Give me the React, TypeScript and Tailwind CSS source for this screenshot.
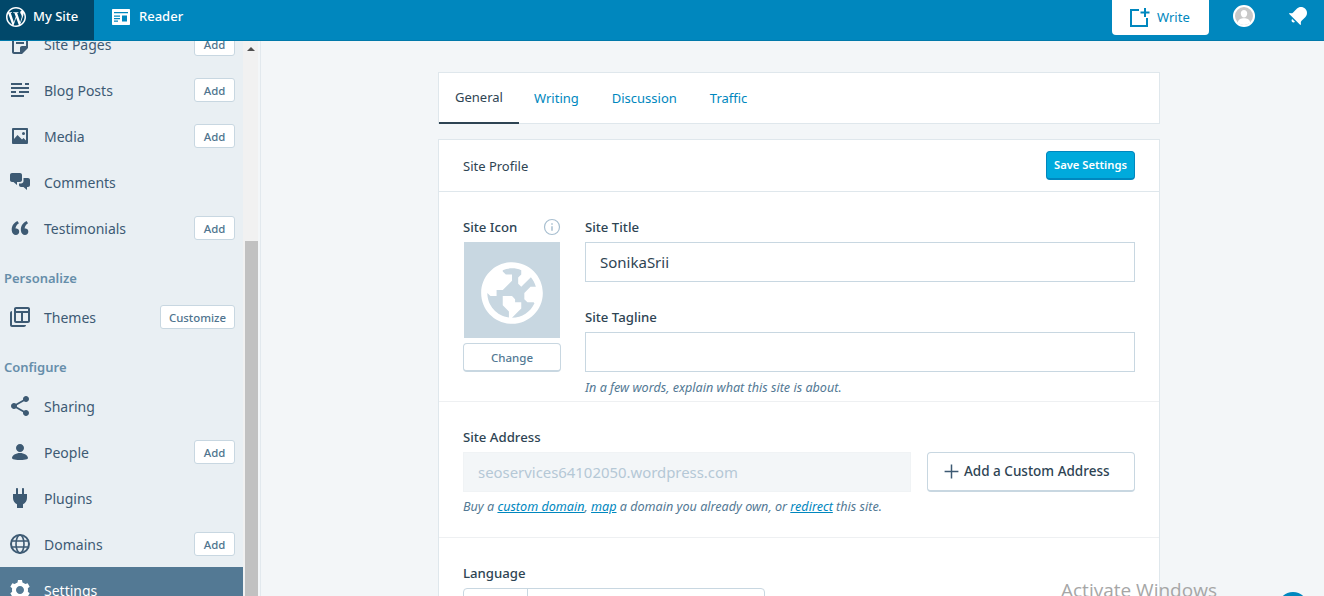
import React from 'react';

const Glyph: React.FC<{ d: string; className?: string }> = ({ d, className = 'w-6 h-6 fill-[#3d5a73]' }) => (
  <svg viewBox="0 0 24 24" className={className}>
    <path d={d} fillRule="evenodd" />
  </svg>
);

const icons = {
  pages: 'M16 8H8V6h8v2zm0 2H8v2h8v-2zm4-6v12l-6 6H6c-1.105 0-2-.895-2-2V4c0-1.105.895-2 2-2h12c1.105 0 2 .895 2 2zm-2 10V4H6v16h6v-4c0-1.105.895-2 2-2h4z',
  posts: 'M16 19H3v-2h13v2zm5-10H3v2h18V9zM3 5v2h11V5H3zm14 0v2h4V5h-4zm-6 8v2h10v-2H11zm-8 0v2h5v-2H3z',
  media: 'M20 4H5C3.9 4 4 4.9 4 6v13c0 1 .9 1 2 1h13c1 0 1-1 1-2V5.500c0-1 0-1.500-1-1.500zM14 9.500a1.500 1.500 0 1 1 3 0 1.500 1.500 0 0 1-3 0zM6 15l3.500-4 4.500 4.500 1.500-1.500 2.500 2.500V6H6v9z',
  comments: 'M2 5c0-1.100.9-2 2-2h8c1.100 0 2 .9 2 2v5c0 1.100-.9 2-2 2H9v3l-3.500-3H4c-1.100 0-2-.9-2-2V5zM15.500 8H20c1.100 0 2 .9 2 2v5c0 1.100-.9 2-2 2h-1v3l-3.500-3H13c-1.100 0-2-.9-2-2v-1.500h2c1.400 0 2.500-1.100 2.500-2.500V8z',
  quote: 'M11.192 15.757c0-.88-.23-1.618-.69-2.217-.326-.412-.768-.683-1.327-.812-.55-.128-1.07-.137-1.54-.028-.16-.95.1-1.956.76-3.022.66-1.065 1.515-1.867 2.558-2.403L9.373 5c-.8.396-1.56.898-2.26 1.505-.71.607-1.34 1.305-1.9 2.094s-.98 1.68-1.25 2.69-.346 2.04-.217 3.1c.168 1.4.62 2.52 1.356 3.35.735.84 1.652 1.26 2.748 1.26.965 0 1.766-.29 2.4-.878.628-.576.94-1.365.94-2.368l.002.003zm9.124 0c0-.88-.23-1.618-.69-2.217-.326-.42-.77-.692-1.327-.817-.56-.124-1.074-.13-1.54-.022-.16-.94.09-1.95.75-3.02.66-1.06 1.514-1.86 2.557-2.4L18.49 5c-.8.396-1.555.898-2.26 1.505-.708.607-1.34 1.305-1.894 2.094-.556.79-.97 1.68-1.24 2.69-.273 1-.345 2.04-.217 3.1.165 1.4.615 2.52 1.35 3.35.732.833 1.646 1.25 2.742 1.25.967 0 1.768-.29 2.402-.876.627-.576.942-1.365.942-2.368v.01z',
  themes: 'M4 6c-1.105 0-2 .895-2 2v12c0 1.100.9 2 2 2h12c1.105 0 2-.895 2-2H4V6zm16-4H8c-1.105 0-2 .895-2 2v12c0 1.105.895 2 2 2h12c1.105 0 2-.895 2-2V4c0-1.105-.895-2-2-2zM8 8h5v8H8V8zm7 0h5v8h-5V8zM8 4h12v2H8V4z',
  share: 'M18 16c-.788 0-1.5.31-2.034.807L8.91 12.7c.05-.222.09-.45.09-.7s-.04-.478-.09-.7l7.05-4.11c.54.5 1.25.81 2.04.81 1.66 0 3-1.34 3-3s-1.34-3-3-3-3 1.34-3 3c0 .25.04.48.09.7L8.04 9.81C7.5 9.31 6.79 9 6 9c-1.66 0-3 1.34-3 3s1.34 3 3 3c.79 0 1.5-.31 2.04-.81l7.05 4.12c-.05.22-.09.45-.09.69 0 1.66 1.34 3 3 3s3-1.34 3-3-1.34-3-3-3z',
  person: 'M12 4c2.200 0 4 1.800 4 4s-1.800 4-4 4-4-1.800-4-4 1.800-4 4-4zm0 16s8 0 8-2c0-2.400-3.900-5-8-5s-8 2.600-8 5c0 2 8 2 8 2z',
  plug: 'M16 8V3c0-.552-.448-1-1-1s-1 .448-1 1v5h-4V3c0-.552-.448-1-1-1s-1 .448-1 1v5H5v4c0 2.790 1.637 5.193 4 6.317V22h6v-3.683c2.363-1.124 4-3.527 4-6.317V8h-3z',
  cog: 'M20 12c0-.568-.06-1.122-.174-1.656l1.834-1.612-2-3.464-2.322.786c-.82-.736-1.787-1.308-2.86-1.657L14 2h-4l-.48 2.397c-1.07.35-2.04.92-2.858 1.657L4.34 5.268l-2 3.464 1.834 1.612C4.06 10.878 4 11.432 4 12s.06 1.122.174 1.656L2.34 15.268l2 3.464 2.322-.786c.82.736 1.787 1.308 2.86 1.657L10 22h4l.48-2.397c1.07-.35 2.04-.92 2.858-1.657l2.322.786 2-3.464-1.834-1.612C19.94 13.122 20 12.568 20 12zm-8 4c-2.210 0-4-1.790-4-4s1.790-4 4-4 4 1.790 4 4-1.790 4-4 4z',
  wp: 'M12 2C6.477 2 2 6.477 2 12s4.477 10 10 10 10-4.477 10-10S17.523 2 12 2zM3.500 12c0-1.232.264-2.402.736-3.459L8.291 19.650C5.455 18.272 3.500 15.365 3.500 12zm8.500 8.500c-.834 0-1.640-.122-2.401-.346l2.551-7.411 2.613 7.158c.017.042.038.081.061.117-.884.311-1.833.482-2.824.482zm1.172-12.485c.512-.027.973-.081.973-.081.458-.054.404-.727-.054-.701 0 0-1.377.108-2.266.108-.835 0-2.239-.108-2.239-.108-.459-.026-.512.674-.054.701 0 0 .434.054.892.081l1.324 3.629-1.860 5.579-3.096-9.208c.512-.027.973-.081.973-.081.458-.054.404-.727-.054-.701 0 0-1.376.108-2.265.108-.16 0-.347-.004-.547-.01C6.418 5.025 9.030 3.500 12 3.500c2.213 0 4.228.846 5.740 2.232-.037-.002-.072-.007-.11-.007-.835 0-1.427.727-1.427 1.509 0 .701.404 1.293.835 1.994.323.566.701 1.293.701 2.344 0 .727-.28 1.572-.647 2.748l-.848 2.833-3.072-9.138zm3.101 11.332l2.596-7.506c.485-1.213.646-2.182.646-3.045 0-.313-.021-.603-.057-.874.664 1.211 1.042 2.602 1.042 4.078 0 3.134-1.700 5.874-4.227 7.347z',
  bell: 'M6.140 14.970l2.828 2.827c-.362.362-.862.586-1.414.586-1.105 0-2-.895-2-2 0-.552.224-1.052.586-1.414zm8.867 5.324L14.300 21 3 9.700l.706-.707 1.102.157c.754.108 1.690-.122 2.077-.51l3.885-3.884c2.340-2.340 6.135-2.340 8.475 0s2.340 6.135 0 8.475l-3.885 3.886c-.388.388-.618 1.323-.51 2.077l.157 1.100z',
  globe: 'M12 2C6.477 2 2 6.477 2 12s4.477 10 10 10 10-4.477 10-10S17.523 2 12 2zm0 18l2-2 1-1v-2h-2v-1l-1-1H9v3l2 2v1.930c-3.940-.494-7-3.858-7-7.930l1 1h2v-2h2l3-3V6h-2L9 5v-.41C9.927 4.210 10.940 4 12 4s2.073.212 3 .59V6l-1 1v2l1 1 3.130-3.130c.752.897 1.304 1.964 1.606 3.130H18l-2 2v2l1 1h2l.286.286C18.030 18.060 15.240 20 12 20z',
};

const ReaderIcon = () => (
  <svg viewBox="0 0 18 16" className="w-[18px] h-[16px] mr-[9px] fill-white">
    <path
      fillRule="evenodd"
      d="M1 0h16c.6 0 1 .4 1 1v14c0 .6-.4 1-1 1H1c-.6 0-1-.4-1-1V1c0-.6.4-1 1-1zm1 3v1.300h14V3H2zm0 3.500v1.300h6V6.500H2zm0 2.500v1.300h6V9H2zm0 2.500v1.300h4v-1.300H2zM10 6.500v6h5v-6h-5z"
    />
  </svg>
);

const DomainIcon = () => (
  <svg viewBox="0 0 24 24" className="w-6 h-6 fill-none stroke-[#3d5a73] stroke-2">
    <circle cx="12" cy="12" r="9" />
    <ellipse cx="12" cy="12" rx="4" ry="9" strokeWidth="1.6" />
    <path d="M3.500 9h17M3.500 15h17" strokeWidth="1.6" />
  </svg>
);

const SideRow: React.FC<{ icon: React.ReactNode; label: string; action?: string }> = ({ icon, label, action }) => (
  <div className="h-[46px] flex items-center pl-2 pr-2 shrink-0">
    <span className="w-6 h-6 mr-3 shrink-0">{icon}</span>
    <span className="flex-1 text-[14px] text-[#3d5a73]">{label}</span>
    {action && (
      <span className="h-[24px] px-[8px] pt-px min-w-[41px] flex items-center justify-center bg-white border border-[#c8d7e1] rounded-[3px] text-[11.4px] text-[#4f748e] font-medium">
        {action}
      </span>
    )}
  </div>
);

const SideHeading: React.FC<{ children: React.ReactNode }> = ({ children }) => (
  <div className="h-[43px] pt-[18px] pl-1 text-[13px] leading-[18px] font-semibold text-[#668eaa] shrink-0">{children}</div>
);

const Sidebar = () => (
  <aside className="w-[243px] shrink-0 bg-[#e9eff3] overflow-hidden">
    <div className="-mt-[20px]">
      <SideRow icon={<Glyph d={icons.pages} />} label="Site Pages" action="Add" />
      <SideRow icon={<Glyph d={icons.posts} />} label="Blog Posts" action="Add" />
      <SideRow icon={<Glyph d={icons.media} />} label="Media" action="Add" />
      <SideRow icon={<Glyph d={icons.comments} />} label="Comments" />
      <SideRow icon={<Glyph d={icons.quote} />} label="Testimonials" action="Add" />
      <SideHeading>Personalize</SideHeading>
      <SideRow icon={<Glyph d={icons.themes} />} label="Themes" action="Customize" />
      <SideHeading>Configure</SideHeading>
      <SideRow icon={<Glyph d={icons.share} />} label="Sharing" />
      <SideRow icon={<Glyph d={icons.person} />} label="People" action="Add" />
      <SideRow icon={<Glyph d={icons.plug} />} label="Plugins" />
      <SideRow icon={<DomainIcon />} label="Domains" action="Add" />
      <div className="h-[46px] flex items-center pl-2 bg-[#537994]">
        <span className="w-6 h-6 mr-3 shrink-0"><Glyph d={icons.cog} className="w-6 h-6 fill-white" /></span>
        <span className="text-[14px] text-white">Settings</span>
      </div>
    </div>
  </aside>
);

const Scrollbar = () => (
  <div className="w-[15px] shrink-0 bg-[#f1f1f1] flex flex-col">
    <div className="h-[200px] flex justify-center pt-[6px]">
      <span className="w-0 h-0 border-x-[4px] border-x-transparent border-b-[4px] border-b-[#505050]" />
    </div>
    <div className="flex-1 ml-[2px] bg-[#c1c1c1]" />
  </div>
);

const Label: React.FC<{ children: React.ReactNode }> = ({ children }) => (
  <div className="text-[13.2px] leading-[20px] font-medium text-[#2e4453]">{children}</div>
);

const Help: React.FC<{ children: React.ReactNode }> = ({ children }) => (
  <p className="text-[12.6px] leading-[16px] italic text-[#537994]">{children}</p>
);

const TextLink: React.FC<{ children: React.ReactNode }> = ({ children }) => (
  <span className="text-[#0087be] underline">{children}</span>
);

export default function App() {
  return (
    <div className="relative h-[596px] overflow-hidden flex flex-col bg-[#f3f6f8] font-['Noto_Sans',sans-serif]">
      <header className="h-[41px] shrink-0 flex bg-[#0087be] border-b border-[#0079aa] text-white text-[13px]">
        <div className="w-[94px] flex items-center pl-[4px] pb-[6px] bg-[#01486a]">
          <Glyph d={icons.wp} className="w-[24px] h-[24px] fill-white mr-[5px]" />
          <span className="font-medium">My Site</span>
        </div>
        <div className="flex items-center pl-[18px] pb-[6px]">
          <ReaderIcon />
          <span className="font-medium">Reader</span>
        </div>
        <div className="ml-auto flex items-start">
          <div className="w-[97px] h-[35px] flex items-center pl-[15px] gap-[6px] bg-white rounded-b-[4px] text-[#0087be] mr-[24px]">
            <svg viewBox="0 0 24 24" className="w-[24px] h-[24px] fill-none stroke-[#0087be] stroke-2">
              <path d="M12 4H4v16h16v-8" />
              <path d="M18 2v9M13.500 6.500h9" />
            </svg>
            Write
          </div>
          <div className="w-[22px] h-[22px] mt-[5px] mr-[31px] rounded-full bg-[#c8c8c8] border-2 border-white overflow-hidden flex justify-center">
            <svg viewBox="0 0 24 24" className="w-full h-full fill-white"><path d="M12 4c2.500 0 4.300 2 4.300 4.700S14.500 14 12 14s-4.300-2.600-4.300-5.300S9.500 4 12 4zm0 11c4 0 8 2 8 5v4H4v-4c0-3 4-5 8-5z" /></svg>
          </div>
          <Glyph d={icons.bell} className="w-[24px] h-[24px] fill-white mt-[4px] mr-[14px]" />
        </div>
      </header>

      <div className="flex-1 min-h-0 flex">
        <Sidebar />
        <Scrollbar />
        <div className="w-[2px] shrink-0 bg-[#f3f6f8]" />
        <main className="flex-1 border-l border-[#e2e9ee] pl-[177px] pt-[31px]">
          <div className="w-[722px]">
            <nav className="h-[52px] flex bg-white border border-[#dfe7ec] text-[13px]">
              <span className="h-[51px] w-[80px] pt-px flex items-center justify-center text-[#2e4453] border-b-2 border-[#2e4453]">General</span>
              <div className="h-[50px] pl-[15px] pt-[2px] flex items-center gap-[33px] text-[#0087be]">
                <span>Writing</span>
                <span>Discussion</span>
                <span>Traffic</span>
              </div>
            </nav>

            <section className="mt-[15px] bg-white border border-[#dfe7ec]">
              <div className="h-[52px] flex items-center justify-between pl-6 pr-6 border-b border-[#dfe7ec]">
                <span className="pt-[2px] text-[13px] text-[#2e4453]">Site Profile</span>
                <span className="h-[29px] w-[89px] pt-[1px] flex items-center justify-center bg-[#00aadc] border border-[#0087be] border-b-2 rounded-[4px] text-[11.2px] font-semibold text-white">Save Settings</span>
              </div>

              <div className="flex pl-6 pr-6 pt-[25px] pb-[5px] border-b border-[#eef0f2]">
                <div className="w-[98px] mr-6 shrink-0">
                  <div className="flex items-center justify-between">
                    <Label>Site Icon</Label>
                    <svg viewBox="0 0 24 24" className="w-[18px] h-[18px] fill-none stroke-[#a8bfd0] stroke-[1.6]">
                      <circle cx="12" cy="12" r="10" />
                      <path d="M12 11v6M12 7v2" strokeWidth="2" />
                    </svg>
                  </div>
                  <div className="mt-[5px] mx-px w-[96px] h-[96px] pt-[5px] bg-[#c8d7e1] flex items-center justify-center">
                    <Glyph d={icons.globe} className="w-[74px] h-[74px] fill-white" />
                  </div>
                  <div className="mt-[5px] h-[29px] pt-[2px] flex items-center justify-center bg-white border border-[#c8d7e1] border-b-2 rounded-[4px] text-[11.5px] font-medium text-[#537994]">Change</div>
                </div>
                <div className="flex-1">
                  <Label>Site Title</Label>
                  <div className="mt-[5px] h-[40px] flex items-center px-[14px] border border-[#c8d7e1] text-[15px] text-[#2e4453]">SonikaSrii</div>
                  <div className="mt-[25px]"><Label>Site Tagline</Label></div>
                  <div className="mt-[5px] h-[40px] border border-[#c8d7e1]" />
                  <div className="mt-[8px]"><Help>In a few words, explain what this site is about.</Help></div>
                </div>
              </div>

              <div className="pl-6 pr-6 pt-[25px] pb-[22px] border-b border-[#eef0f2]">
                <Label>Site Address</Label>
                <div className="mt-[5px] flex gap-4">
                  <div className="w-[448px] h-[40px] flex items-center px-[14px] bg-[#f3f6f8] border border-[#f0f3f5] text-[14.9px] text-[#b5c8d6] whitespace-nowrap">seoservices64102050.wordpress.com</div>
                  <div className="flex-1 h-[40px] flex items-center pl-[15px] gap-[4px] bg-white border border-[#c8d7e1] border-b-2 rounded-[4px] text-[13.5px] font-medium text-[#2e4453]">
                    <svg viewBox="0 0 16 16" className="w-[17px] h-[17px] stroke-[#3d5a73] stroke-[1.4]"><path d="M8 1.500v13M1.500 8h13" /></svg>
                    Add a Custom Address
                  </div>
                </div>
                <div className="mt-[7px]">
                  <Help>Buy a <TextLink>custom domain</TextLink>, <TextLink>map</TextLink> a domain you already own, or <TextLink>redirect</TextLink> this site.</Help>
                </div>
              </div>

              <div className="pl-6 pt-[25px] h-[80px]">
                <Label>Language</Label>
                <div className="mt-[5px] w-[302px] h-[40px] flex border border-[#c8d7e1] rounded-[4px]">
                  <span className="w-[64px] border-r border-[#c8d7e1]" />
                </div>
              </div>
            </section>
          </div>
        </main>
      </div>

      <span className="absolute left-[1061px] top-[577px] text-[19px] leading-[26px] text-[#a6a6a6] font-['Open_Sans',sans-serif]">Activate Windows</span>
      <span className="absolute left-[1278px] top-[592px] w-[30px] h-[30px] rounded-full bg-[#0087be]" />
    </div>
  );
}
